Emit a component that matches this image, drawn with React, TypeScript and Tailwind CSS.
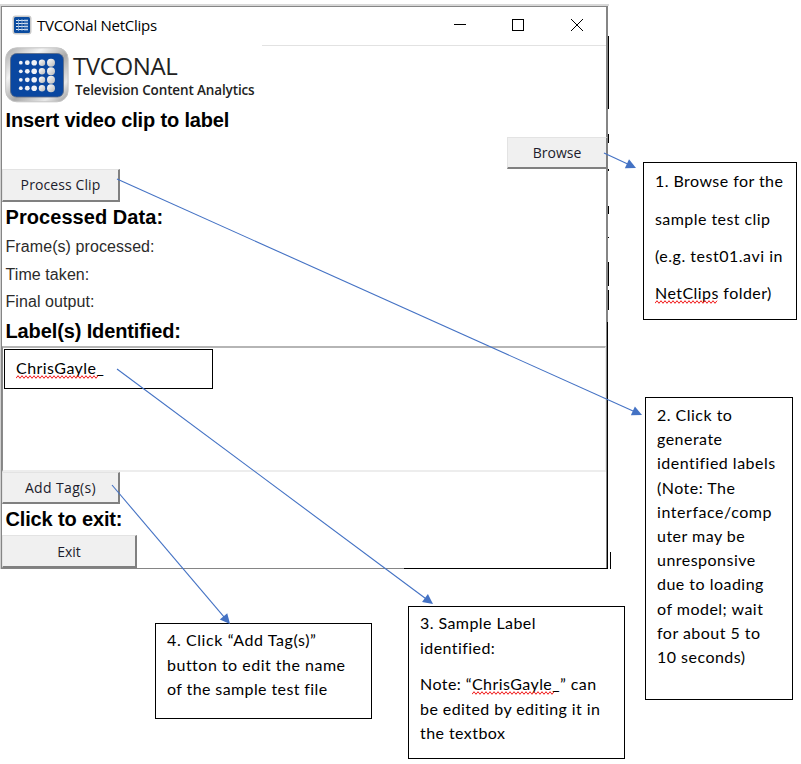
import type { ReactNode } from "react";

function BrandMark({ className }: { className: string }) {
  const radii = [1.9, 2.4, 2.8, 3.2, 4];
  const xs = [15.8, 22.3, 29.2, 37, 46];
  const ys = [15.7, 24.3, 32.8, 41.2];
  return (
    <svg viewBox="0 0 64 56" preserveAspectRatio="none" className={className}>
      <defs>
        <linearGradient id="metal" x1="0" y1="0" x2="1" y2="1">
          <stop offset="0" stopColor="#a8a8a8" />
          <stop offset="0.3" stopColor="#f4f4f4" />
          <stop offset="0.55" stopColor="#a9a9a9" />
          <stop offset="0.8" stopColor="#e8e8e8" />
          <stop offset="1" stopColor="#999" />
        </linearGradient>
        <linearGradient id="dot" x1="0" y1="0" x2="1" y2="1">
          <stop offset="0" stopColor="#fff" />
          <stop offset="1" stopColor="#b8b8b8" />
        </linearGradient>
      </defs>
      <rect x="0.7" y="0.8" width="62.4" height="54" rx="11" fill="url(#metal)" stroke="#c4c4c4" strokeWidth="1" />
      <rect x="5.5" y="6.5" width="53" height="43.5" rx="6" fill="#0a47a0" stroke="#5d6b83" strokeWidth="0.8" />
      {ys.map((y) =>
        xs.map((x, i) => <circle key={`${x}-${y}`} cx={x} cy={y} r={radii[i]} fill={i > 2 ? "url(#dot)" : "#f1f3f6"} />),
      )}
    </svg>
  );
}

function TitleIcon() {
  return (
    <svg width="20" height="20" viewBox="0 0 20 20">
      <rect x="0.5" y="0.5" width="19" height="19" rx="3" fill="#c9c9c9" />
      <rect x="2" y="2" width="16" height="16" rx="1.5" fill="#0a4b9f" />
      <path d="M4 5.5h12M4 8.5h12M4 11.500h12M4 14.500h12" stroke="#dfe8f2" strokeWidth="1.2" />
      <path d="M6.500 4v12M10 4v12M13 4v12M15 4v12" stroke="#8fb0d8" strokeWidth="0.8" />
    </svg>
  );
}

function Button({ className, children }: { className: string; children: ReactNode }) {
  return (
    <button
      className={`flex items-center justify-center border-t border-l border-r-2 border-b-2 border-t-[#e3e3e3] border-l-[#e3e3e3] border-r-[#808080] border-b-[#808080] bg-[#f0f0f0] font-['Open_Sans',sans-serif] text-[14px] text-[#1c1c2c] ${className}`}
    >
      {children}
    </button>
  );
}

function Heading({ className, children }: { className: string; children: ReactNode }) {
  return <h2 className={`shrink-0 pl-[3.500px] text-[20px] font-bold whitespace-nowrap text-black ${className}`}>{children}</h2>;
}

function Misspelt({ width, children }: { width: number; children: ReactNode }) {
  const points = Array.from({ length: Math.floor(width / 2) + 1 }, (_, i) => `${i * 2},${i % 2 ? 0.7 : 3.3}`).join(" ");
  return (
    <span className="relative">
      {children}
      <svg width={width} height="4" className="absolute top-[17px] left-0">
        <polyline points={points} fill="none" stroke="#f01818" strokeWidth="1" />
      </svg>
    </span>
  );
}

function Callout({ className, children }: { className: string; children: ReactNode }) {
  return (
    <div className={`absolute border border-black bg-white pl-[11px] font-[Lato,sans-serif] text-[16px] whitespace-nowrap text-black ${className}`}>
      {children}
    </div>
  );
}

function Connectors() {
  const arrows = [
    [604, 153, 636, 168],
    [117, 179, 642, 415],
    [117, 369, 433, 604],
    [112, 485, 230, 624],
  ];
  return (
    <svg width="801" height="764" className="pointer-events-none absolute top-0 left-0">
      {arrows.map(([x1, y1, x2, y2]) => {
        const angle = Math.atan2(y2 - y1, x2 - x1);
        return (
          <g key={x1 + y1} fill="#4472c4" stroke="#4472c4">
            <line x1={x1} y1={y1} x2={x2 - 8 * Math.cos(angle)} y2={y2 - 8 * Math.sin(angle)} strokeWidth="1.1" />
            <path d="M0 0L-10 -4.900V4.900Z" stroke="none" transform={`translate(${x2} ${y2}) rotate(${(angle * 180) / Math.PI})`} />
          </g>
        );
      })}
    </svg>
  );
}

function AppWindow() {
  return (
    <main className="absolute top-[6px] left-px flex h-[563px] w-[607px] flex-col border border-r-2 border-[#858585] bg-white font-['Liberation_Sans',sans-serif]">
      <header className="flex h-[38px] shrink-0 items-center pb-[2px] pl-[10px]">
        <TitleIcon />
        <span className="ml-[5px] font-['Open_Sans',sans-serif] text-[15px] tracking-[-0.26px] text-black">TVCONal NetClips</span>
        <svg width="130" height="14" viewBox="0 0 130 14" className="mr-[23px] ml-auto" fill="none" stroke="#000" shapeRendering="crispEdges">
          <path d="M1 6.500h12M59.500 1.500h11v11h-11z" />
          <path d="M118 1l12 12M118 13l12-12" shapeRendering="auto" />
        </svg>
      </header>
      <div className="ml-[260px] h-px shrink-0 bg-[#e2e2e2]" />
      <div className="flex h-[57px] shrink-0 pt-px pl-[3px]">
        <BrandMark className="h-[56px] w-[64px]" />
        <div className="flex flex-col pl-1 whitespace-nowrap text-[#222]">
          <span className="mt-[5px] font-['Open_Sans',sans-serif] text-[24px] leading-[28px] font-medium tracking-[-0.400px]">TVCONAL</span>
          <span className="pl-[2px] font-['Open_Sans',sans-serif] text-[13.500px] leading-[20px] font-semibold tracking-[-0.130px]">Television Content Analytics</span>
        </div>
      </div>
      <Heading className="h-[34px] leading-[34px] tracking-[-0.160px]">Insert video clip to label</Heading>
      <Button className="-mr-[2px] h-[32px] w-[101px] shrink-0 self-end">Browse</Button>
      <Button className="h-[33px] w-[118px] shrink-0 pb-[2px] tracking-[0.100px]">Process Clip</Button>
      <Heading className="h-[31px] leading-[31px] tracking-[0.060px]">Processed Data:</Heading>
      <div className="h-[83px] shrink-0 pl-[3.500px] text-[16px] leading-[27.500px] tracking-[0.080px] text-[#2b2b2b]">
        <p>Frame(s) processed:</p>
        <p>Time taken:</p>
        <p>Final output:</p>
      </div>
      <Heading className="h-[30px] leading-[30px] tracking-[-0.120px]">Label(s) Identified:</Heading>
      <div className="h-[126px] shrink-0 border-t-2 border-r border-b-2 border-l border-t-[#b5b5b5] border-r-[#eee] border-b-[#ededed] border-l-[#8a8a8a] pt-px pl-px">
        <div className="h-[40px] w-[209px] border border-black pl-[11px] font-[Lato,sans-serif] text-[16px] leading-[35px] tracking-[0.450px] text-black">
          <Misspelt width={82}>ChrisGayle_</Misspelt>
        </div>
      </div>
      <Button className="h-[32px] w-[118px] shrink-0 tracking-[0.350px]">Add Tag(s)</Button>
      <Heading className="h-[31px] leading-[31px] tracking-[-0.150px]">Click to exit:</Heading>
      <Button className="h-[33px] w-[135px] shrink-0">Exit</Button>
    </main>
  );
}

export default function App() {
  return (
    <div className="relative h-[764px] w-[801px] overflow-hidden bg-white">
      <div className="h-[6px] w-[609px] border-b-2 border-[#d8d8d8]" />
      <div className="absolute top-[6px] left-0 h-[563px] w-px bg-[#d0d0d0]" />
      <AppWindow />
      <svg width="801" height="764" className="absolute top-0 left-0" shapeRendering="crispEdges" stroke="#000">
        <path d="M608.500 36v73M608.500 134v9M608.500 169v2M608.500 206v8M608.500 237v1M608.500 262v24M608.500 290v20M607.500 322v247M404 568.500h204M610.500 552v17" fill="none" />
      </svg>
      <Callout className="top-[162px] left-[643px] h-[158px] w-[154px] leading-[37.500px] tracking-[0.440px]">
        <div className="-mt-px">
          <p>1. Browse for the</p>
          <p>sample test clip</p>
          <p className="tracking-[0.520px]">(e.g. test01.avi in</p>
          <p className="-mt-px"><Misspelt width={63}>NetClips</Misspelt> folder)</p>
        </div>
      </Callout>
      <Callout className="top-[397px] left-[645px] h-[303px] w-[148px] pt-[5px] leading-[24.200px] tracking-[0.480px]">
        <p>2. Click to</p>
        <p>generate</p>
        <p>identified labels</p>
        <p>(Note: The</p>
        <p className="tracking-[0.560px]">interface/comp</p>
        <p>uter may be</p>
        <p>unresponsive</p>
        <p>due to loading</p>
        <p>of model; wait</p>
        <p>for about 5 to</p>
        <p>10 seconds)</p>
      </Callout>
      <Callout className="top-[606px] left-[408px] h-[153px] w-[217px] pt-[4px] leading-[24.500px] tracking-[0.430px]">
        <p>3. Sample Label</p>
        <p>identified:</p>
        <p className="mt-3">Note: “<Misspelt width={82}>ChrisGayle_</Misspelt>” can</p>
        <p>be edited by editing it in</p>
        <p>the textbox</p>
      </Callout>
      <Callout className="top-[623px] left-[155px] h-[96px] w-[217px] pt-[4px] leading-[24.500px] tracking-[0.500px]">
        <p className="tracking-[0.600px]">4. Click “Add Tag(s)”</p>
        <p>button to edit the name</p>
        <p className="tracking-[0.400px]">of the sample test file</p>
      </Callout>
      <Connectors />
    </div>
  );
}
